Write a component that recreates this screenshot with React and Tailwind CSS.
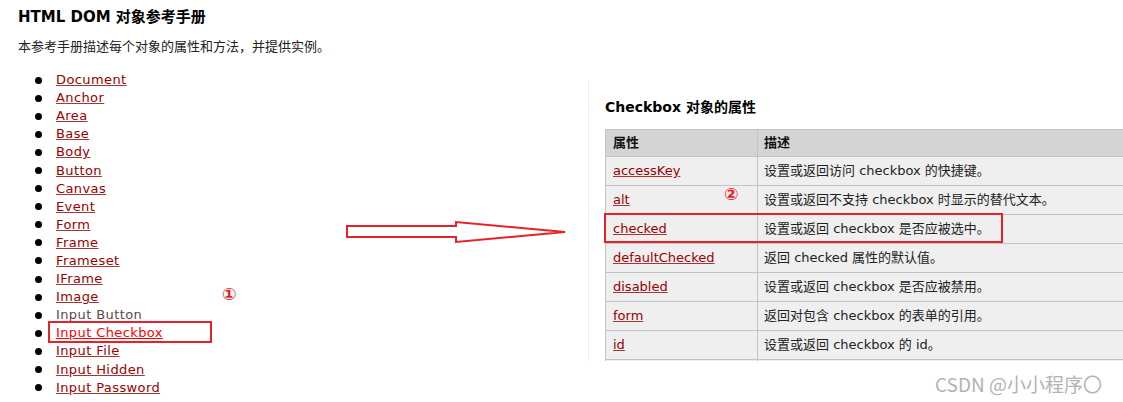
const items = [
  'Document', 'Anchor', 'Area', 'Base', 'Body', 'Button', 'Canvas', 'Event', 'Form',
  'Frame', 'Frameset', 'IFrame', 'Image', 'Input Button', 'Input Checkbox', 'Input File',
  'Input Hidden', 'Input Password',
]

const rows = [
  { name: 'accessKey', desc: '设置或返回访问 checkbox 的快捷键。' },
  { name: 'alt', desc: '设置或返回不支持 checkbox 时显示的替代文本。' },
  { name: 'checked', desc: '设置或返回 checkbox 是否应被选中。' },
  { name: 'defaultChecked', desc: '返回 checked 属性的默认值。' },
  { name: 'disabled', desc: '设置或返回 checkbox 是否应被禁用。' },
  { name: 'form', desc: '返回对包含 checkbox 的表单的引用。' },
  { name: 'id', desc: '设置或返回 checkbox 的 id。' },
]

const font = { fontFamily: '"DejaVu Sans", "Noto Sans CJK SC", sans-serif' }

function linkClass(name) {
  if (name === 'Input Checkbox') return 'text-[#f00] underline decoration-[#f00]'
  if (name === 'Input Button') return 'text-[#5e4848]'
  return 'text-[#900] underline decoration-[#a33]'
}

export default function App() {
  return (
    <div className="relative w-[1123px] h-[402px] bg-white overflow-hidden flex text-[#111]" style={font}>
      {/* left: reference index */}
      <div className="w-[588px] shrink-0 pl-[18px] pt-[8px]">
        <h2 className="text-[15px] font-bold leading-[18px] text-black">HTML DOM 对象参考手册</h2>
        <p className="mt-[12px] text-[13px] leading-[18px] text-[#222]">本参考手册描述每个对象的属性和方法，并提供实例。</p>
        <ul className="mt-[15px]">
          {items.map((n) => (
            <li key={n} className="flex items-center h-[18.1px] text-[13px] leading-[18px] tracking-[0.4px]">
              <span className="w-[7px] h-[7px] rounded-full bg-black ml-[17px] mr-[14px]" />
              <span className={linkClass(n)}>{n}</span>
            </li>
          ))}
        </ul>
      </div>

      {/* right: checkbox properties */}
      <div className="flex-1 mt-[80px] h-[281px] border-l border-[#eeeeee] pl-[16px] pt-[17px] overflow-hidden">
        <h2 className="text-[14px] font-bold leading-[20px] text-black">Checkbox 对象的属性</h2>
        <table className="mt-[12px] w-[560px] border-collapse text-[13px]">
          <thead>
            <tr className="h-[27px] bg-[#d4d4d4]">
              <th className="w-[152px] border border-[#c3c3c3] px-[7px] text-left font-bold text-[13px]">属性</th>
              <th className="border border-[#c3c3c3] px-[6px] text-left font-bold text-[13px]">描述</th>
            </tr>
          </thead>
          <tbody>
            {rows.map((r) => (
              <tr key={r.name} className="h-[29px] bg-[#efefef]">
                <td className="border border-[#c3c3c3] px-[7px] text-[#900] underline decoration-[#a33]">{r.name}</td>
                <td className="border border-[#c3c3c3] px-[6px] text-[#222]">{r.desc}</td>
              </tr>
            ))}
            <tr className="h-[28px] bg-[#efefef]">
              <td className="border border-[#c3c3c3]" />
              <td className="border border-[#c3c3c3]" />
            </tr>
          </tbody>
        </table>
      </div>

      {/* annotations */}
      <div className="absolute left-[48px] top-[321px] w-[164px] h-[22px] border-2 border-[#e8202a]" />
      <div className="absolute left-[604px] top-[213px] w-[399px] h-[30px] border-2 border-[#e8202a]" />
      <span className="absolute left-[222px] top-[284px] text-[17px] leading-[20px] font-bold text-[#e8202a]">①</span>
      <span className="absolute left-[724px] top-[184px] text-[17px] leading-[20px] font-bold text-[#e8202a]">②</span>
      <svg className="absolute left-[340px] top-[215px]" width="235" height="35" viewBox="0 0 235 35">
        <polygon
          points="7,11 116,11 116,7 225,17 116,27 116,22 7,22"
          fill="white"
          stroke="#e8202a"
          strokeWidth="2"
          strokeLinejoin="miter"
        />
      </svg>
      <span
        className="absolute left-[935px] top-[372px] text-[19px] leading-[24px] text-[#b3b3b3]"
        style={{ fontFamily: '"Noto Sans CJK SC", "Noto Sans", sans-serif' }}
      >
        CSDN @小小程序〇
      </span>
    </div>
  )
}
